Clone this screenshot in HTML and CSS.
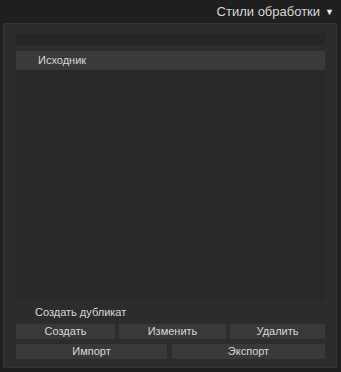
FILE: index.html
```
<!DOCTYPE html>
<html lang="ru">
<head>
  <meta charset="UTF-8">
  <title>Стили обработки</title>
  <link rel="stylesheet" href="styles.css">
</head>
<body>
<div class="header">
  <span class="title">Стили обработки</span>
  <span class="arrow">&#9660;</span>
</div>
<div class="panel">
  <div class="search"></div>
  <div class="list">
    <div class="item">Исходник</div>
  </div>
  <div class="dup">Создать дубликат</div>
  <div class="row three">
    <div class="btn">Создать</div>
    <div class="btn">Изменить</div>
    <div class="btn">Удалить</div>
  </div>
  <div class="row two">
    <div class="btn">Импорт</div>
    <div class="btn">Экспорт</div>
  </div>
</div>
</body>
</html>
```
FILE: styles.css
```
:root{
  --page: #1f1f1f;
  --panel: #2c2c2c;
  --list: #282828;
  --btn: #393939;
  --text: #d8d8d8;
}
body{
  margin: 0;
  width: 341px;
  height: 372px;
  background-color: var(--page);
  font-family: "Liberation Sans", Arial, sans-serif;
  color: var(--text);
  overflow: hidden;
}
.header{
  height: 23px;
  display: flex;
  align-items: center;
  justify-content: flex-end;
  padding-right: 7px;
  gap: 5px;
}
.title{
  font-size: 13px;
}
.arrow{
  font-size: 9px;
  color: #ececec;
}
.panel{
  margin-left: 3px;
  width: 334px;
  height: 345px;
  box-sizing: border-box;
  background-color: var(--panel);
  border: 1px solid #343434;
  padding: 9px 11px 0 12px;
  display: flex;
  flex-direction: column;
}
.search{
  height: 12px;
  background-color: #262626;
}
.list{
  margin-top: 6px;
  height: 249px;
  background-color: var(--list);
}
.item{
  height: 19px;
  background-color: #3a3a3a;
  font-size: 11px;
  line-height: 19px;
  padding-left: 22px;
}
.dup{
  font-size: 11px;
  height: 24px;
  line-height: 24px;
  padding-left: 19px;
}
.row{
  display: grid;
  gap: 4px;
  margin-bottom: 5px;
}
.three{
  grid-template-columns: 99px 107px 1fr;
}
.two{
  grid-template-columns: 151px 1fr;
  gap: 5px;
}
.btn{
  height: 15px;
  line-height: 15px;
  background-color: var(--btn);
  font-size: 11px;
  text-align: center;
}
```
